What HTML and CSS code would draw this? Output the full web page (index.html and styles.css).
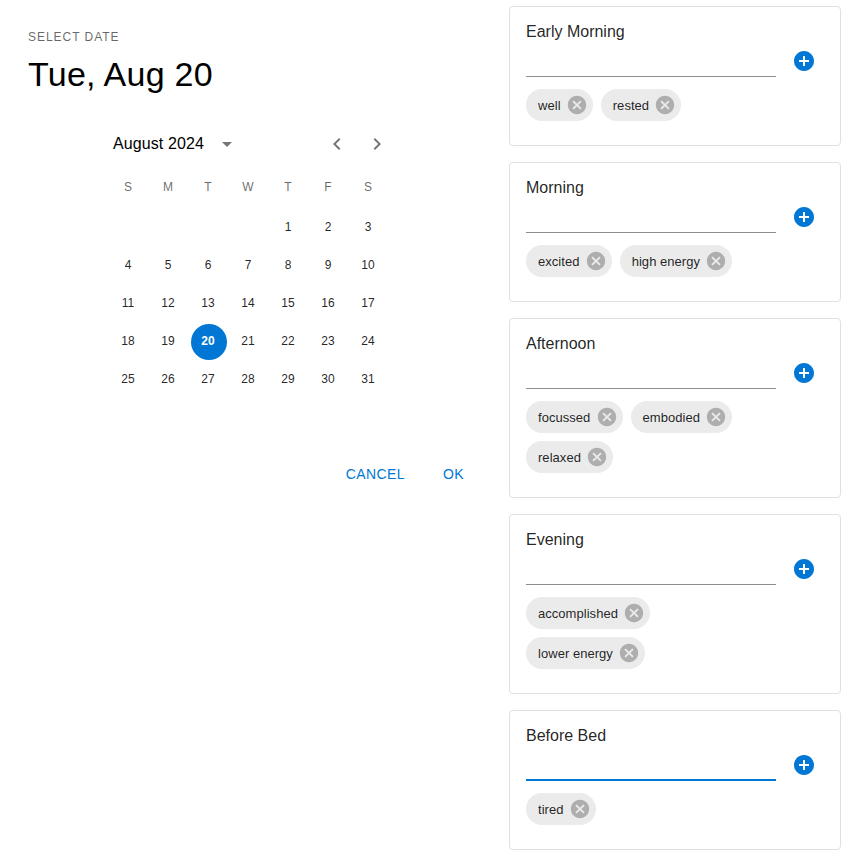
FILE: index.html
```html
<!DOCTYPE html>
<html>

<head>
	<meta charset="utf-8">
	<title>Select date</title>
	<link rel="stylesheet" href="styles.css">
</head>

<body>
	<svg class="sprite" width="0" height="0">
		<symbol id="add" viewBox="0 0 24 24"><path d="M12 2C6.48 2 2 6.48 2 12s4.48 10 10 10 10-4.48 10-10S17.52 2 12 2zm5 11h-4v4h-2v-4H7v-2h4V7h2v4h4v2z"/></symbol>
		<symbol id="cancel" viewBox="0 0 24 24"><path d="M12 2C6.47 2 2 6.47 2 12s4.47 10 10 10 10-4.47 10-10S17.53 2 12 2zm5 13.59L15.59 17 12 13.41 8.41 17 7 15.59 10.59 12 7 8.41 8.41 7 12 10.59 15.59 7 17 8.41 13.41 12 17 15.59z"/></symbol>
	</svg>

	<div class="page">
		<div class="picker">
			<div class="overline">SELECT DATE</div>
			<h1 class="date">Tue, Aug 20</h1>

			<div class="calendar">
				<div class="month">
					<span class="month-label">August 2024</span>
					<svg class="icon caret" viewBox="0 0 24 24"><path d="M7 10l5 5 5-5z"/></svg>
					<svg class="icon prev" viewBox="0 0 24 24"><path d="M15.41 16.59L10.83 12l4.58-4.59L14 6l-6 6 6 6 1.41-1.41z"/></svg>
					<svg class="icon next" viewBox="0 0 24 24"><path d="M8.59 16.59L13.17 12 8.59 7.41 10 6l6 6-6 6-1.41-1.41z"/></svg>
				</div>

				<div class="weekdays">
					<span>S</span><span>M</span><span>T</span><span>W</span><span>T</span><span>F</span><span>S</span>
				</div>

				<div class="days">
					<span></span><span></span><span></span><span></span><span>1</span><span>2</span><span>3</span>
					<span>4</span><span>5</span><span>6</span><span>7</span><span>8</span><span>9</span><span>10</span>
					<span>11</span><span>12</span><span>13</span><span>14</span><span>15</span><span>16</span><span>17</span>
					<span>18</span><span>19</span><span class="selected">20</span><span>21</span><span>22</span><span>23</span><span>24</span>
					<span>25</span><span>26</span><span>27</span><span>28</span><span>29</span><span>30</span><span>31</span>
				</div>
			</div>

			<div class="actions">
				<span class="action">CANCEL</span>
				<span class="action">OK</span>
			</div>
		</div>

		<div class="cards">
			<div class="card">
				<div class="card-title">Early Morning</div>
				<div class="entry">
					<div class="field"></div>
					<svg class="add"><use href="#add"/></svg>
				</div>
				<div class="chips">
					<span class="chip">well<svg class="chip-x"><use href="#cancel"/></svg></span>
					<span class="chip">rested<svg class="chip-x"><use href="#cancel"/></svg></span>
				</div>
			</div>

			<div class="card">
				<div class="card-title">Morning</div>
				<div class="entry">
					<div class="field"></div>
					<svg class="add"><use href="#add"/></svg>
				</div>
				<div class="chips">
					<span class="chip">excited<svg class="chip-x"><use href="#cancel"/></svg></span>
					<span class="chip">high energy<svg class="chip-x"><use href="#cancel"/></svg></span>
				</div>
			</div>

			<div class="card">
				<div class="card-title">Afternoon</div>
				<div class="entry">
					<div class="field"></div>
					<svg class="add"><use href="#add"/></svg>
				</div>
				<div class="chips">
					<span class="chip">focussed<svg class="chip-x"><use href="#cancel"/></svg></span>
					<span class="chip">embodied<svg class="chip-x"><use href="#cancel"/></svg></span>
					<span class="chip">relaxed<svg class="chip-x"><use href="#cancel"/></svg></span>
				</div>
			</div>

			<div class="card">
				<div class="card-title">Evening</div>
				<div class="entry">
					<div class="field"></div>
					<svg class="add"><use href="#add"/></svg>
				</div>
				<div class="chips">
					<span class="chip">accomplished<svg class="chip-x"><use href="#cancel"/></svg></span>
					<span class="chip">lower energy<svg class="chip-x"><use href="#cancel"/></svg></span>
				</div>
			</div>

			<div class="card">
				<div class="card-title">Before Bed</div>
				<div class="entry">
					<div class="field focused"></div>
					<svg class="add"><use href="#add"/></svg>
				</div>
				<div class="chips">
					<span class="chip">tired<svg class="chip-x"><use href="#cancel"/></svg></span>
				</div>
			</div>
		</div>
	</div>
</body>

</html>
```

FILE: styles.css
```css
html,
body {
	margin: 0;
	height: 100%;
	overflow: hidden;
	background: #fff;
	font-family: "Liberation Sans", Arial, sans-serif;
	color: rgba(0, 0, 0, 0.87);
}

.sprite {
	position: absolute;
}

.page {
	display: flex;
}

/* date picker */
.picker {
	width: 509px;
	box-sizing: border-box;
	padding: 30px 0 0 28px;
}

.overline {
	font-size: 12px;
	line-height: 14px;
	letter-spacing: 0.96px;
	color: rgba(0, 0, 0, 0.6);
}

.date {
	margin: 10px 0 0;
	font-size: 34px;
	font-weight: 400;
	line-height: 40px;
	letter-spacing: 0.25px;
	color: #000;
}

.calendar {
	width: 280px;
	margin: 35px 0 0 81px;
}

.month {
	display: flex;
	align-items: center;
	height: 30px;
	padding-left: 4px;
}

.month-label {
	width: 102px;
	font-size: 16px;
	line-height: 24px;
	letter-spacing: 0.1px;
	white-space: nowrap;
	color: #000;
}

.icon {
	width: 24px;
	height: 24px;
	fill: rgba(0, 0, 0, 0.54);
}

.prev {
	margin-left: 86px;
}

.next {
	margin-left: 16px;
}

.weekdays,
.days {
	display: grid;
	grid-template-columns: repeat(7, 40px);
}

.weekdays {
	margin-top: 8px;
	height: 40px;
	line-height: 40px;
	font-size: 12px;
	text-align: center;
	color: rgba(0, 0, 0, 0.6);
}

.weekdays span {
	padding-right: 2px;
}

.days {
	margin-top: 2px;
	grid-auto-rows: 38px;
	font-size: 12px;
}

.days span {
	display: flex;
	align-items: center;
	justify-content: center;
	box-sizing: border-box;
	width: 36px;
	height: 36px;
	margin: 1px 2px;
	padding: 0 2px 2px 0;
	border-radius: 50%;
}

.days .selected {
	background: #0077d4;
	color: #fff;
	font-weight: 700;
}

.actions {
	display: flex;
	justify-content: flex-end;
	gap: 22px;
	margin: 59px 37px 0 0;
}

.action {
	padding: 6px 8px;
	font-size: 14px;
	line-height: 20px;
	letter-spacing: 0.4px;
	color: #0077d4;
}

/* right hand cards */
.cards {
	display: flex;
	flex-direction: column;
	gap: 16px;
	width: 332px;
	padding-top: 6px;
}

.card {
	padding: 16px 16px 24px;
	border: 1px solid #e0e0e0;
	border-radius: 4px;
}

.card-title {
	font-size: 16px;
	line-height: 18px;
}

.entry {
	display: flex;
	align-items: flex-end;
}

.field {
	width: 250px;
	height: 35px;
	border-bottom: 1px solid #8c8c8c;
}

.field.focused {
	border-bottom: 2px solid #0077d4;
	height: 34px;
}

.add {
	width: 24px;
	height: 24px;
	margin: 0 0 4px 16px;
	fill: #0077d4;
}

.chips {
	display: flex;
	flex-wrap: wrap;
	gap: 8px;
	width: 250px;
	margin-top: 12px;
}

.chip {
	display: flex;
	align-items: center;
	height: 32px;
	padding-left: 12px;
	border-radius: 16px;
	background: #ebebeb;
	font-size: 13px;
	letter-spacing: 0.04px;
}

.chip-x {
	width: 22px;
	height: 22px;
	margin: 0 5px 0 5.2px;
	fill: rgba(0, 0, 0, 0.26);
}
```
